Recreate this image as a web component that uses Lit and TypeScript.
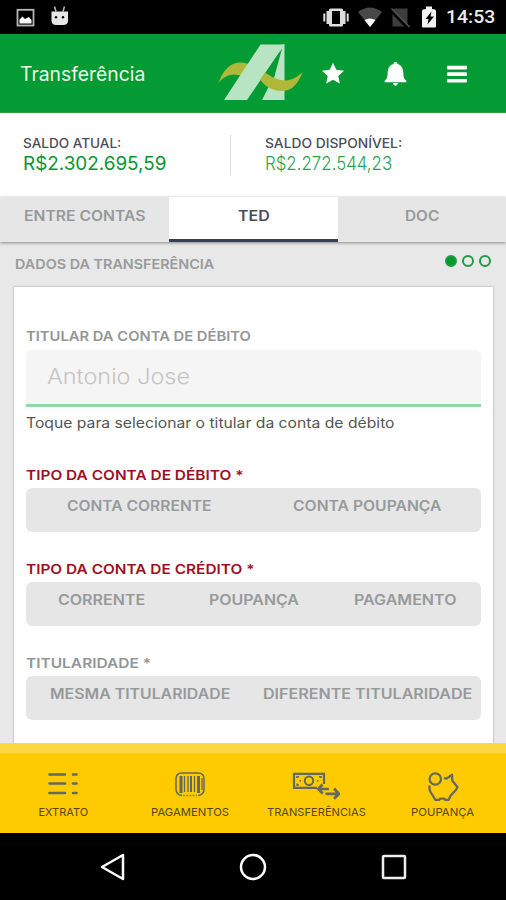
import { LitElement, html, css, svg } from "lit";
import { customElement, property } from "lit/decorators.js";

/** A single line of text whose letterforms are widened to fill a given width. */
@customElement("fitted-text")
class FittedText extends LitElement {
  @property() text = "";
  @property({ type: Number }) span = 100;

  static styles = css`
    :host { display: block; flex: none; white-space: nowrap; }
    .line { display: inline-block; vertical-align: top; transform-origin: 0 50%; }
  `;

  updated() {
    const line = this.renderRoot.querySelector(".line") as HTMLElement;
    const natural = line.offsetWidth;
    line.style.transform = `scaleX(${(this.span / natural).toFixed(4)})`;
    line.style.marginRight = `${this.span - natural}px`;
  }

  render() {
    return html`<span class="line">${this.text}</span>`;
  }
}

type Label = [text: string, width: number];

const text = (cls: string, [value, width]: Label) =>
  html`<fitted-text class=${cls} .text=${value} .span=${width}></fitted-text>`;

const groups: { title: Label; cls: string; options: Label[]; layout: string }[] = [
  { title: ["TIPO DA CONTA DE DÉBITO *", 218], cls: "label required", layout: "two",
    options: [["CONTA CORRENTE", 145], ["CONTA POUPANÇA", 148]] },
  { title: ["TIPO DA CONTA DE CRÉDITO *", 228], cls: "label required", layout: "three",
    options: [["CORRENTE", 87], ["POUPANÇA", 90], ["PAGAMENTO", 102]] },
  { title: ["TITULARIDADE *", 125], cls: "label", layout: "two",
    options: [["MESMA TITULARIDADE", 180], ["DIFERENTE TITULARIDADE", 209]] },
];

const statementIcon = svg`
  <path d="M2.500 4.500h15.500M26 4.500h3.500M2.500 13.500h15.500M26 13.500h3.500M2.500 23h15.500M26 23h3.500" stroke-width="2.600" stroke-linecap="round"/>`;
const barcodeIcon = svg`
  <path d="M8 25.500C4 25 2 22.500 2 19V9C2 5 4 3 8 3h16c4 0 6 2 6 6v10c0 3.500-2 6-6 6.500" stroke-width="1.500"/>
  <path d="M7 6v17M24.500 6v17" stroke-width="3"/>
  <path d="M10.500 6v16M14 6v16M20.500 6v16M28 8v12" stroke-width="1.300"/>
  <path d="M17 6v16" stroke-width="2"/>
  <path d="M9 25.500h14" stroke-width="1.500" stroke-dasharray="2 1.200" opacity=".7"/>`;
const transferIcon = svg`
  <path d="M25 17.800H2V3.800h30V14" stroke-width="2.200"/>
  <circle cx="17" cy="10.800" r="4.200" stroke-width="2"/>
  <path d="M5 8V6.800h2M5 13.500v1.500h2M29 8V6.800h-2M7.500 10.800h1.500M25 10.800h1.500" stroke-width="1.500"/>
  <path d="M30.500 14.500L26.300 19l4.500 4.500M26.500 19H37M33.500 23.800h13M42 18.500l5 5.300-5 5" stroke-width="2.700"/>`;
const piggyIcon = svg`
  <circle cx="8.300" cy="9" r="5.700" stroke-width="2.200"/>
  <path d="M17 7.800l2.500.8 5.500-3.800.3 6 5.200 6.200-1.800 3.200-5 5.300-2.200 4.500h-3.200l-1-1.300h-4.300l-1 1.300H8.500L3.300 21.500Q2 18.500 2.600 15.500" stroke-width="2.300" stroke-linejoin="round"/>`;

const navItems: { label: Label; icon: unknown; w: number }[] = [
  { label: ["EXTRATO", 50], icon: statementIcon, w: 32 },
  { label: ["PAGAMENTOS", 78], icon: barcodeIcon, w: 32 },
  { label: ["TRANSFERÊNCIAS", 99], icon: transferIcon, w: 48 },
  { label: ["POUPANÇA", 63], icon: piggyIcon, w: 32 },
];

@customElement("app-root")
class AppRoot extends LitElement {
  static styles = css`
    :host {
      display: flex; flex-direction: column; width: 100%; height: 900px; overflow: hidden;
      font-family: Inter, "Open Sans", sans-serif; background: #e8e8e8;
    }
    svg { display: block; flex: none; }
    .status {
      flex: none; height: 34px; background: #000; display: flex; align-items: center;
      justify-content: space-between; box-sizing: border-box; padding: 0 11px 0 16px; color: #ececec;
    }
    .clock { font: 500 19px/36px Roboto, sans-serif; }
    .status-right { display: flex; align-items: center; }
    .header {
      flex: none; height: 79px; box-sizing: border-box; background: #049a34; color: #fff;
      display: flex; align-items: center; padding-left: 20px; border-bottom: 1px solid #2fa03c;
    }
    .title { font-size: 19.500px; width: 198px; line-height: 26px; color: #e9f8ec; padding-top: 1px; }
    .balances {
      flex: none; height: 84px; background: #fff; display: grid;
      grid-template-columns: 229.500px 1px auto; align-items: start; padding-top: 22px; box-sizing: border-box;
    }
    .balance { padding-left: 23px; }
    .rule { height: 40px; background: #dedede; }
    .available { padding-left: 34.500px; }
    .caption { font-size: 13px; font-weight: 500; line-height: 16px; color: #4b4c56; }
    .amount { font-size: 19px; line-height: 26px; color: #079632; }
    .light { font-weight: 300; color: #2ba34f; }
    .tabs {
      flex: none; display: grid; grid-template-columns: 169px 169px 168px; height: 45px;
      box-shadow: 0 1px 3px #8a8a8a; z-index: 1;
    }
    .tab {
      display: flex; justify-content: center; background: #e6e6e6; color: #96999b;
      box-sizing: border-box; padding-top: 9px; font: 600 14px/20px Inter, sans-serif;
    }
    .active { background: #fff; color: #4a4d59; border-bottom: 3px solid #354052; }
    .content { flex: 1; min-height: 0; overflow: hidden; background: #e8e8e8; }
    .section {
      height: 45px; display: flex; justify-content: space-between; box-sizing: border-box;
      padding: 12px 15px 0;
    }
    .section-title { font: 600 13.500px/20px Inter, sans-serif; color: #989b9b; }
    .dots { display: flex; gap: 5px; padding-top: 1px; }
    .dot { width: 12px; height: 12px; border-radius: 50%; border: 2px solid #1d9c43; box-sizing: border-box; }
    .filled { background: #049a2c; }
    .card {
      margin: 0 13px 0 14px; height: 500px; background: #fff; box-sizing: border-box;
      padding: 39px 12px 0; box-shadow: 0 0 2px #999;
    }
    .label { font: 600 13.500px/20px Inter, sans-serif; color: #929697; }
    .required { color: #9d1023; }
    .field {
      height: 57px; box-sizing: border-box; background: #f5f5f5; margin-top: 4px;
      border-bottom: 3px solid #8fd9a2; border-radius: 5px 5px 0 0; padding: 0 21px;
    }
    .value { font-size: 21.500px; font-weight: 300; line-height: 53px; color: #c4c4c4; }
    .helper { margin-top: 6px; font-size: 14px; font-weight: 400; line-height: 20px; color: #555; }
    .groups { padding-top: 31.500px; display: flex; flex-direction: column; gap: 26.500px; }
    .options {
      height: 44.500px; margin-top: 3px; background: #e6e6e6; border-radius: 6px; display: grid;
      box-sizing: border-box; padding-top: 8px; font: 600 14px/20px Inter, sans-serif; color: #969a9b;
    }
    .two { grid-template-columns: 1fr 1fr; }
    .three { grid-template-columns: 1fr 1fr 1fr; }
    .option { justify-self: center; }
    .nav {
      flex: none; height: 90px; box-sizing: border-box; border-top: 10px solid #fed842;
      background: #fecb00; display: grid; grid-template-columns: repeat(4, 1fr);
    }
    .item { display: flex; flex-direction: column; align-items: center; padding-top: 17px; }
    .item-label { font-size: 11px; line-height: 15px; color: #55471a; padding-top: 4px; }
    .system {
      flex: none; height: 67px; background: #000; display: grid;
      grid-template-columns: repeat(3, 140.500px); align-items: center; justify-content: center; justify-items: center;
    }
  `;

  statusIcons() {
    return html`<svg width="140" height="34" viewBox="0 0 140 34">
      <g fill="#ddd">
        <rect x="23" y="8.500" width="14" height="18" rx="1.500"/><rect x="26" y="11" width="8" height="13" fill="#000"/>
        <path d="M20.500 11h3v13h-3zM36.500 11h3v13h-3zM17.300 13.500h2v8h-2zM40.700 13.500h2v8h-2z"/>
      </g>
      <path d="M52 12q12-9 24 0L64 27z" fill="#484848"/><path d="M58.500 20q5.500-3 11 0L64 27z" fill="#fff"/>
      <path d="M88 8.500h13.500v18H86.500V12z" fill="#3c3c3c"/><path d="M84.500 10l17 18" stroke="#000" stroke-width="3"/><path d="M85.500 8.500l18 18.500" stroke="#555" stroke-width="1.500"/>
      <path d="M120 9V6.500h6V9q4 0 4 2v15.500q0 1-1 1h-12q-1 0-1-1V11q0-2 4-2z" fill="#f2f2f2"/><path d="M125.500 11.500l-6 7.500h3l-1 5.500 6.500-8h-3.500z" fill="#000"/>
    </svg>`;
  }

  render() {
    return html`
      <div class="status">
        <svg width="54" height="34" viewBox="0 0 54 34">
          <rect x="1.500" y="9.800" width="16" height="15.700" fill="none" stroke="#b5b5b5" stroke-width="1.800"/>
          <path d="M3.500 23.500v-4l3-3 2.500 2.500 4-2 2.500 3v3.500z" fill="#fff"/>
          <path d="M38.500 6.500l1.500 5M48.500 6.500l-1.500 5" stroke="#bbb" stroke-width="1.500"/>
          <path d="M35.500 11.500h16.500v9q0 4.500-5 4.500h-6.500q-5 0-5-4.500z" fill="#e7e7e7"/>
          <circle cx="40" cy="17.300" r="1.200"/><circle cx="47" cy="17.300" r="1.200"/>
        </svg>
        <div class="status-right">
          ${this.statusIcons()}
          ${text("clock", ["14:53", 49])}
        </div>
      </div>
      <div class="header">
        ${text("title", ["Transferência", 125])}
        <svg width="288" height="78" viewBox="218 34 288 78">
          <path d="M218.500 83C222 73 229 62.500 240 62.500q6-.5 13 3.500l-8 12C235 72 226 74 218.500 83z" fill="#b0b83a"/>
          <path d="M281.500 44.500h3V100H262l7-14z" fill="#b9e4c4"/>
          <path d="M260.500 44.500h24L247 100h-23z" fill="#b9e4c4"/>
          <path d="M282 48.500l-8.500 31.500h-11l-1.500-.5z" fill="#049a34"/>
          <path d="M265 72.500c6 4.500 13 7.500 20 8 7-.5 13-3.500 17.700-8.500-4 10-10 19-20 19-10 .5-18-5-22.700-11.500z" fill="#b0b83a"/>
          <path d="M333 62.800l3.300 7 7.700.9-5.700 5.300 1.500 7.500-6.800-3.700-6.800 3.700 1.500-7.500-5.700-5.300 7.700-.9z" fill="#fff"/>
          <path d="M395.500 62a1.800 1.800 0 011.900 2c4 1 5.600 4 5.900 8.500.2 5 .8 6.500 3 8v1.800h-21.600v-1.800c2.200-1.500 2.800-3 3-8 .3-4.500 1.900-7.500 5.900-8.500a1.800 1.800 0 011.900-2zM393 83h5q-.5 2.800-2.500 2.800T393 83z" fill="#fff"/>
          <g fill="#fff"><rect x="447" y="65.800" width="20" height="3.600" rx="1"/><rect x="447" y="72.300" width="20" height="3.600" rx="1"/><rect x="447" y="79" width="20" height="3.600" rx="1"/></g>
        </svg>
      </div>
      <div class="balances">
        <div class="balance">
          ${text("caption", ["SALDO ATUAL:", 98])}
          ${text("amount", ["R$2.302.695,59", 143])}
        </div>
        <div class="rule"></div>
        <div class="available">
          ${text("caption", ["SALDO DISPONÍVEL:", 137])}
          ${text("amount light", ["R$2.272.544,23", 127])}
        </div>
      </div>
      <div class="tabs">
        <div class="tab">${text("tab-text", ["ENTRE CONTAS", 121])}</div>
        <div class="tab active">${text("tab-text", ["TED", 32])}</div>
        <div class="tab">${text("tab-text", ["DOC", 34])}</div>
      </div>
      <div class="content">
        <div class="section">
          ${text("section-title", ["DADOS DA TRANSFERÊNCIA", 199])}
          <div class="dots"><div class="dot filled"></div><div class="dot"></div><div class="dot"></div></div>
        </div>
        <div class="card">
          ${text("label", ["TITULAR DA CONTA DE DÉBITO", 225])}
          <div class="field">${text("value", ["Antonio Jose", 143])}</div>
          ${text("helper", ["Toque para selecionar o titular da conta de débito", 368])}
          <div class="groups">
            ${groups.map((g) => html`<div>
              ${text(g.cls, g.title)}
              <div class="options ${g.layout}">${g.options.map((o) => text("option", o))}</div>
            </div>`)}
          </div>
        </div>
      </div>
      <div class="nav">
        ${navItems.map((n) => html`<div class="item">
          <svg width=${n.w} height="31" viewBox="0 0 ${n.w} 31" fill="none" stroke="#64685f">${n.icon}</svg>
          ${text("item-label", n.label)}
        </div>`)}
      </div>
      <div class="system">
        <svg width="28" height="30" viewBox="0 0 28 30"><path d="M24 3v24L3 15z" fill="none" stroke="#fff" stroke-width="2.500" stroke-linejoin="round"/></svg>
        <svg width="30" height="30" viewBox="0 0 30 30"><circle cx="15" cy="15" r="12" fill="none" stroke="#fff" stroke-width="2.500"/></svg>
        <svg width="28" height="28" viewBox="0 0 28 28"><rect x="3" y="3" width="22" height="22" rx="1" fill="none" stroke="#eee" stroke-width="2.500"/></svg>
      </div>
    `;
  }
}
